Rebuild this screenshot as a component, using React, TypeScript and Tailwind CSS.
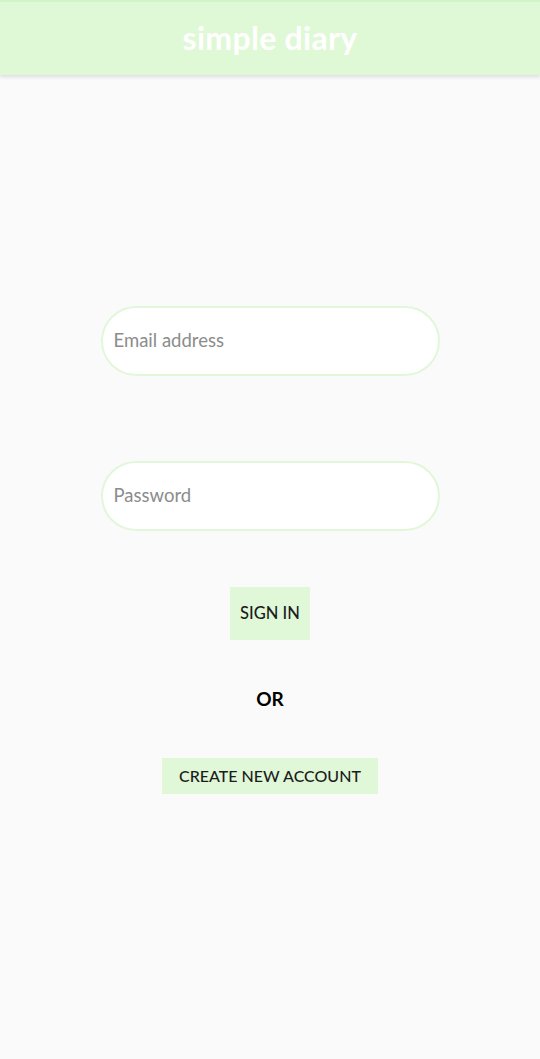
import React from "react";

export default function App() {
  return (
    <div className="min-h-[1059px] w-full bg-[#fafafa] flex flex-col" style={{ fontFamily: "Lato, 'Noto Sans', sans-serif" }}>
      <header className="h-[75px] bg-[#dff9d6] border-t-2 border-[#d3f3c9] flex items-center justify-center shadow-[0_2px_4px_rgba(0,0,0,0.12)] relative z-10">
        <h1 className="text-white text-[32px] font-bold tracking-[0.3px] leading-none -mt-[1px]">simple diary</h1>
      </header>
      <main className="flex flex-col items-center pt-[231px]">
        <div className="w-[339px] h-[70px] rounded-full border-2 border-[#e2f7da] bg-white flex items-center px-[11px]">
          <input
            className="w-full bg-transparent outline-none text-[18.5px] text-[#333] placeholder:text-[#8c8c8c]"
            placeholder="Email address"
          />
        </div>
        <div className="mt-[85px] w-[339px] h-[70px] rounded-full border-2 border-[#e2f7da] bg-white flex items-center px-[11px]">
          <input
            type="password"
            className="w-full bg-transparent outline-none text-[18.5px] text-[#333] placeholder:text-[#8c8c8c]"
            placeholder="Password"
          />
        </div>
        <button className="mt-[56px] w-[80px] h-[53px] bg-[#e0f8d8] text-[#1c1c1c] text-[16.5px] font-medium flex items-center justify-center">
          SIGN IN
        </button>
        <div className="mt-[47px] text-[19px] font-bold text-black leading-[24px]">OR</div>
        <button className="mt-[47px] w-[216px] h-[36px] bg-[#e0f8d8] text-[#1c1c1c] text-[16px] font-medium flex items-center justify-center">
          CREATE NEW ACCOUNT
        </button>
      </main>
    </div>
  );
}
